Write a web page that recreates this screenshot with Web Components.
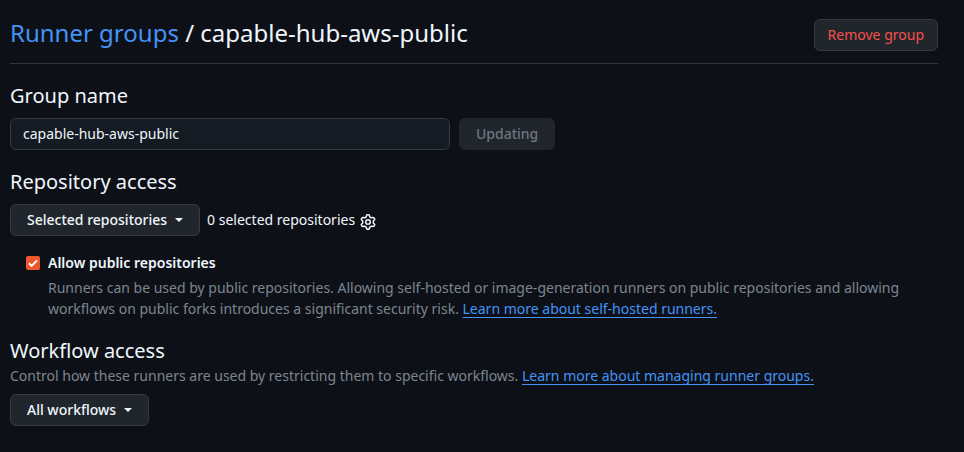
<!DOCTYPE html>
<html lang="en"><head><meta charset="utf-8"><title>Runner group</title>
<style>
html,body{margin:0;padding:0;background:#0d1117;}
body{font-family:"Noto Sans",sans-serif;font-size:14px;line-height:21px;color:#f0f6fc;height:452px;overflow:hidden;}
</style></head><body>
<runner-page></runner-page>
<template id="t-btn"><style>
:host{display:inline-flex;align-items:center;box-sizing:border-box;height:32px;padding:0 16px;background:#21262d;border:1px solid #363b42;border-radius:6px;font-size:14px;font-weight:500;line-height:20px;color:#f0f6fc;white-space:nowrap;flex:none;}
:host([danger]){color:#f85149;padding:0 13px;font-weight:400;}
:host([disabled]){color:#6e7681;border-color:#21262d;}
.caret{display:none;width:0;height:0;margin-left:8px;border:4px solid transparent;border-top-color:currentColor;border-bottom:0;}
:host([caret]) .caret{display:inline-block;}
</style><slot></slot><span class="caret"></span></template>
<template id="t-head"><style>
:host{display:block;font-size:20px;line-height:30px;font-weight:400;color:#f0f6fc;}
</style><slot></slot></template>
<template id="t-link"><style>
:host{display:inline;color:#4493f8;}
:host([u]){text-decoration:underline;text-underline-offset:.2rem;}
</style><slot></slot></template>
<template id="t-check"><style>
:host{display:grid;grid-template-columns:14px 1fr;column-gap:8px;margin-left:16px;}
.box{width:14px;height:14px;border-radius:2px;background:#f0562b;margin-top:4px;display:block;}
.label{font-weight:600;color:#f0f6fc;}
.note{grid-column:2;color:#7d8590;margin-top:4px;}
</style><svg class="box" viewBox="0 0 14 14"><path d="M3 7.2l2.7 2.7L11 4.4" fill="none" stroke="#fff" stroke-width="2"/></svg><div class="label"><slot name="label"></slot></div><div class="note"><slot></slot></div></template>
<template id="t-page"><style>
:host{display:block;margin:0 26px 0 10px;}
.top{display:flex;justify-content:space-between;align-items:flex-start;height:63px;box-sizing:content-box;border-bottom:1px solid #30363d;padding-top:0;}
h1{margin:15px 0 0;font-size:24px;line-height:36px;font-weight:400;color:#f0f6fc;}
.rm{margin-top:19px;}
.name{margin-top:17px;}
.row{display:flex;align-items:center;}
.input{box-sizing:border-box;width:440px;height:32px;background:#151b23;border:1px solid #363b42;border-radius:6px;padding:0 12px;line-height:30px;color:#f0f6fc;margin-right:9px;}
.r1{margin-top:7px;}
.repo{margin-top:17px;}
.r2{margin-top:7px;}
.count{margin-left:7px;margin-bottom:2px;}
.gear{margin-left:5px;width:16px;height:16px;fill:#f0f6fc;margin-top:3px;}
runner-check{margin-top:16px;}
.wf{margin-top:17px;}
.muted{color:#7d8590;margin-top:-1px;}
.r3{margin-top:8px;}
</style>
<div class="top"><h1><runner-link>Runner groups</runner-link> / capable-hub-aws-public</h1><runner-btn class="rm" danger>Remove group</runner-btn></div>
<runner-head class="name">Group name</runner-head>
<div class="row r1"><div class="input">capable-hub-aws-public</div><runner-btn disabled>Updating</runner-btn></div>
<runner-head class="repo">Repository access</runner-head>
<div class="row r2"><runner-btn caret>Selected repositories</runner-btn><span class="count">0 selected repositories</span><svg class="gear" viewBox="0 0 16 16"><path fill-rule="evenodd" d="M8 0a8.2 8.2 0 0 1 .701.031C9.444.095 9.99.645 10.16 1.29l.288 1.107c.018.066.079.158.212.224.231.114.454.243.668.386.123.082.233.09.299.071l1.103-.303c.644-.176 1.392.021 1.82.63.27.385.506.792.704 1.218.315.675.111 1.422-.364 1.891l-.814.806c-.049.048-.098.147-.088.294.016.257.016.515 0 .772-.01.147.038.246.088.294l.814.806c.475.469.679 1.216.364 1.891a7.977 7.977 0 0 1-.704 1.217c-.428.61-1.176.807-1.82.63l-1.102-.302c-.067-.019-.177-.011-.3.071a5.909 5.909 0 0 1-.668.386c-.133.066-.194.158-.211.224l-.29 1.106c-.168.646-.715 1.196-1.458 1.26a8.006 8.006 0 0 1-1.402 0c-.743-.064-1.289-.614-1.458-1.26l-.289-1.106c-.018-.066-.079-.158-.212-.224a5.738 5.738 0 0 1-.668-.386c-.123-.082-.233-.09-.299-.071l-1.103.303c-.644.176-1.392-.021-1.82-.63a8.12 8.12 0 0 1-.704-1.218c-.315-.675-.111-1.422.363-1.891l.815-.806c.05-.048.098-.147.088-.294a6.214 6.214 0 0 1 0-.772c.01-.147-.038-.246-.088-.294l-.815-.806C.635 6.045.431 5.298.746 4.623a7.92 7.92 0 0 1 .704-1.217c.428-.61 1.176-.807 1.82-.63l1.102.302c.067.019.177.011.3-.071.214-.143.437-.272.668-.386.133-.066.194-.158.211-.224l.29-1.106C6.009.645 6.556.095 7.299.03 7.53.01 7.764 0 8 0Zm-.571 1.525c-.036.003-.108.036-.137.146l-.289 1.105c-.147.561-.549.967-.998 1.189-.173.086-.34.183-.5.29-.417.278-.97.423-1.529.27l-1.103-.303c-.109-.03-.175.016-.195.045-.22.312-.412.644-.573.99-.014.031-.021.11.059.19l.815.806c.411.406.562.957.53 1.456a4.709 4.709 0 0 0 0 .582c.032.499-.119 1.05-.53 1.456l-.815.806c-.081.08-.073.159-.059.19.162.346.353.677.573.989.02.03.085.076.195.046l1.102-.303c.56-.153 1.113-.008 1.53.27.161.107.328.204.501.29.447.222.85.629.997 1.189l.289 1.105c.029.109.101.143.137.146a6.6 6.6 0 0 0 1.142 0c.036-.003.108-.036.137-.146l.289-1.105c.147-.561.549-.967.998-1.189.173-.086.34-.183.5-.29.417-.278.97-.423 1.529-.27l1.103.303c.109.029.175-.016.195-.045.22-.313.411-.644.573-.99.014-.031.021-.11-.059-.19l-.815-.806c-.411-.406-.562-.957-.53-1.456a4.709 4.709 0 0 0 0-.582c-.032-.499.119-1.05.53-1.456l.815-.806c.081-.08.073-.159.059-.19a6.464 6.464 0 0 0-.573-.989c-.02-.03-.085-.076-.195-.046l-1.102.303c-.56.153-1.113.008-1.53-.27a4.44 4.44 0 0 0-.501-.29c-.447-.222-.85-.629-.997-1.189l-.289-1.105c-.029-.11-.101-.143-.137-.146a6.6 6.6 0 0 0-1.142 0ZM11 8a3 3 0 1 1-6 0 3 3 0 0 1 6 0ZM9.5 8a1.5 1.5 0 1 0-3.001.001A1.5 1.5 0 0 0 9.5 8Z"/></svg></div>
<runner-check><span slot="label">Allow public repositories</span><span>Runners can be used by public repositories. Allowing self-hosted or image-generation runners on public repositories and allowing</span> <span>workflows on public forks introduces a significant security risk.</span> <runner-link u>Learn more about self-hosted runners.</runner-link></runner-check>
<runner-head class="wf">Workflow access</runner-head>
<div class="muted">Control how these runners are used by restricting them to specific workflows. <runner-link u>Learn more about managing runner groups.</runner-link></div>
<div class="row r3"><runner-btn caret>All workflows</runner-btn></div>
</template>
<script>
for (const [tag, id] of [['runner-btn','t-btn'],['runner-head','t-head'],['runner-link','t-link'],['runner-check','t-check'],['runner-page','t-page']]) {
  customElements.define(tag, class extends HTMLElement {
    constructor(){super();this.attachShadow({mode:'open'}).appendChild(document.getElementById(id).content.cloneNode(true));}
  });
}
</script>
</body></html>
